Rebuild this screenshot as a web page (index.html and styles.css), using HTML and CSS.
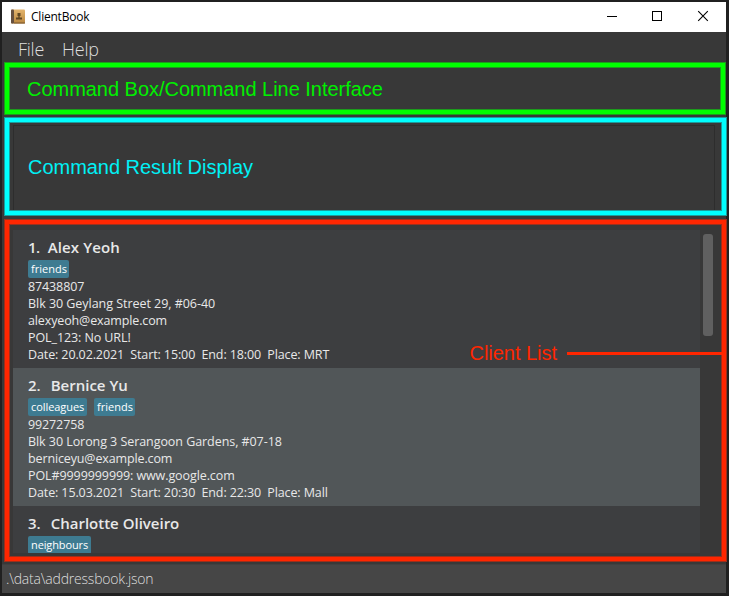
FILE: index.html
```
<!DOCTYPE html>
<html lang="en">
<head>
<meta charset="utf-8">
<title>ClientBook</title>
<link rel="stylesheet" href="styles.css">
</head>
<body>
<div class="window">
  <header class="titlebar">
    <svg class="book" width="15" height="15" viewBox="0 0 15 15">
      <defs><linearGradient id="cover" x1="0" y1="0" x2="0" y2="1"><stop offset="0" stop-color="#e3b46c"/><stop offset="1" stop-color="#b9863f"/></linearGradient></defs>
      <rect x="0" y="0.5" width="14" height="14" rx="1" fill="url(#cover)"/>
      <rect x="0" y="0.5" width="3" height="14" rx="1" fill="#66503f"/>
      <path d="M3 14h11" stroke="#76552c"/>
      <path d="M6.500 4h3v3h-.8v1.500h2.300v2h-6v-2h2.300V7h-.8z" fill="#604723"/>
    </svg>
    <span class="app-name">ClientBook</span>
    <svg class="controls" width="102" height="12" viewBox="0 0 102 12" fill="none" stroke="#000">
      <path d="M0 6.500h10M45.500 1.500h9v9h-9z" shape-rendering="crispEdges"/>
      <path d="M91.200 1.200l9.600 9.600M100.800 1.200l-9.600 9.600" stroke-width="1.100"/>
    </svg>
  </header>
  <nav class="menu"><span class="file">File</span><span class="help">Help</span></nav>
  <section class="pane command"><span>Command Box/Command Line Interface</span></section>
  <section class="pane result"><div class="result-box"><span>Command Result Display</span></div></section>
  <section class="pane clients">
    <div class="list">
      <article class="card">
        <h2 class="n1"><span>1.</span><span>Alex Yeoh</span></h2>
        <div class="tags"><span class="t-fr">friends</span></div>
        <p class="phone">87438807</p>
        <p class="a1">Blk 30 Geylang Street 29, #06-40</p>
        <p class="e1">alexyeoh@example.com</p>
        <p class="p1">POL_123: No URL!</p>
        <p class="date">Date: 20.02.2021&nbsp; Start: 15:00&nbsp; End: 18:00&nbsp; Place: MRT</p>
      </article>
      <article class="card alt">
        <h2><span>2.</span><span>Bernice Yu</span></h2>
        <div class="tags"><span class="t-co">colleagues</span><span class="t-fr">friends</span></div>
        <p class="phone">99272758</p>
        <p class="a2">Blk 30 Lorong 3 Serangoon Gardens, #07-18</p>
        <p class="e2">berniceyu@example.com</p>
        <p class="p2">POL#9999999999: www.google.com</p>
        <p class="date">Date: 15.03.2021&nbsp; Start: 20:30&nbsp; End: 22:30&nbsp; Place: Mall</p>
      </article>
      <article class="card">
        <h2><span>3.</span><span>Charlotte Oliveiro</span></h2>
        <div class="tags"><span class="t-ne">neighbours</span></div>
      </article>
    </div>
    <div class="scroll"><div class="thumb"></div></div>
    <div class="callout"><span>Client List</span><i></i></div>
  </section>
  <footer class="status"><span>.\data\addressbook.json</span></footer>
</div>
</body>
</html>
```
FILE: styles.css
```
* { box-sizing: border-box; }
body { margin: 0; width: 729px; height: 596px; overflow: hidden; background: #202020; font-family: "Open Sans", sans-serif; }
h2, p { margin: 0; }
.window { margin: 2px 0 0 2px; width: 727px; height: 591px; display: flex; flex-direction: column; background: linear-gradient(90deg, #383838 724px, #202020 724px); }
.titlebar { width: 724px; height: 30px; flex: none; background: #fff; display: flex; align-items: center; padding: 0 17px 0 9px; }
.book { margin-top: -1px; }
.app-name { margin-left: 5px; font: 12px/16px "Open Sans", sans-serif; letter-spacing: -0.22px; color: #000; }
.controls { margin-left: auto; margin-top: -2px; }
.menu { height: 30px; flex: none; padding: 3px 0 0 16px; display: flex; gap: 18px; color: #dedede; font-size: 18px; line-height: 28px; font-weight: 300; letter-spacing: -0.25px; }
.pane { margin-left: 3px; flex: none; border: 4px solid; box-shadow: 0 0 0 1px var(--edge), inset 0 0 0 1px var(--edge); font: 20px/24px "Liberation Sans", sans-serif; display: flex; letter-spacing: -0.03px; }
.command { --edge: #1c9c1c; width: 720px; height: 51px; margin-top: 1px; border-color: #00ff00; color: #00f000; padding: 10px 0 0 18px; }
.result { --edge: #1c9c9c; width: 721px; height: 97px; margin-top: 4px; border-color: #00ffff; color: #00f0f5; padding: 3px 7px 1px 4px; }
.result-box { flex: 1; border: 1px solid #2d2d2d; border-bottom: 0; padding: 29px 0 0 14px; }
.clients { --edge: #9c2f1c; position: relative; width: 721px; height: 341px; margin-top: 5px; border-color: #ff2600; padding: 6px 0 4px 4px; }
.list { width: 687px; height: 323px; overflow: hidden; background: #3c3d3f; color: #e8e8e8; font-family: "Open Sans", sans-serif; letter-spacing: 0; }
.card { height: 138px; padding: 7px 15px 0; background: #3d3e40; }
.alt { background: #515658; }
.card h2 { display: flex; gap: 10px; font-size: 15px; line-height: 21px; font-weight: 600; height: 23px; }
.card .n1 { gap: 8px; letter-spacing: 0.12px; }
.n1 span:first-child { letter-spacing: -0.5px; }
.tags { display: flex; gap: 7px; height: 18px; }
.tags span { height: 18px; padding: 0 3px; border-radius: 2px; background: #3e7b91; color: #fff; font-size: 11px; line-height: 18px; white-space: nowrap; }
.card p { font-size: 12.5px; line-height: 17px; height: 17px; white-space: nowrap; }
.card .phone { letter-spacing: -0.12px; }
.card .a1 { letter-spacing: -0.04px; }
.card .a2 { letter-spacing: -0.06px; }
.card .e1, .card .e2 { letter-spacing: -0.13px; }
.card .p1, .card .p2 { letter-spacing: -0.09px; }
.card .date { letter-spacing: -0.11px; }
.t-fr { width: 41px; }
.t-co { width: 59px; letter-spacing: -0.06px; }
.t-ne { width: 63px; letter-spacing: -0.12px; }
.scroll { padding: 4px 0 0 3px; }
.thumb { width: 10px; height: 102px; border-radius: 3px; background: #606060; }
.callout { position: absolute; right: 0; top: 117px; display: flex; align-items: center; gap: 10px; color: #ff2600; }
.callout i { width: 155px; height: 3px; background: #ff2600; }
.status { width: 724px; height: 29px; margin-top: auto; background: #464646; border-top: 1px solid #404040; padding: 4px 0 0 4px; color: #dedede; font-size: 14px; line-height: 20px; font-weight: 300; letter-spacing: -0.2px; }
```
